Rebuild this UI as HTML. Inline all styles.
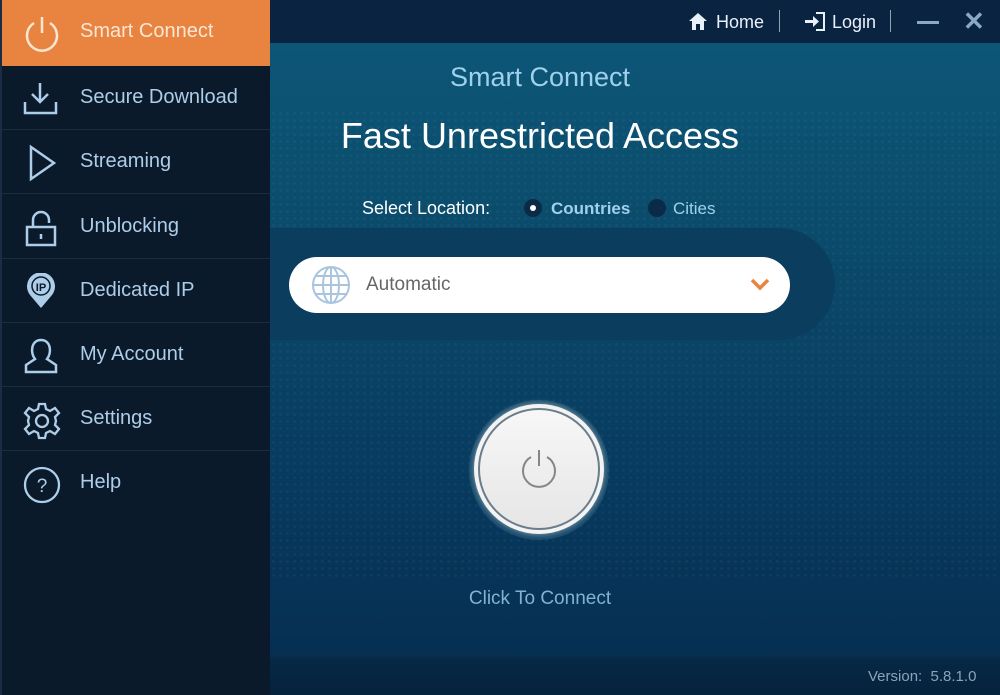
<!DOCTYPE html>
<html><head><style>
*{margin:0;padding:0;box-sizing:border-box}
body{width:1000px;height:695px;overflow:hidden;font-family:"Liberation Sans",sans-serif;background:#0b1a2c;position:relative}
.side{position:absolute;left:0;top:0;width:270px;height:695px;background:#0a1a2b}
.item{position:absolute;left:0;width:270px;height:64px;border-bottom:1px solid #1a2c40;color:#aecde8;font-size:20px}
.item span{position:absolute;left:80px;top:20px}
.item svg{position:absolute;left:22px;top:14px}
.act{background:#e8843f;color:#fbe6d6;border-bottom:none}
.main{position:absolute;left:270px;top:0;width:730px;height:695px;background:linear-gradient(#0d5677 40px,#0b4d6d 200px,#07395e 500px,#062f52 655px,#062845 660px,#06223d)}
.top{position:absolute;left:270px;top:0;width:730px;height:43px;background:#0a2340}
.dots{position:absolute;left:270px;top:110px;width:730px;height:470px;background-image:radial-gradient(circle,rgba(255,255,255,.04) 1.2px,transparent 1.5px);background-size:7px 7px}
</style></head><body>
<div class="main"></div>
<div class="dots"></div>
<div class="top">
 <svg style="position:absolute;left:418px;top:12px" width="20" height="19" viewBox="0 0 20 19"><path d="M10 1 L1 9 H4 V18 H8 V12 H12 V18 H16 V9 H19 Z" fill="#e8f0f8"/></svg>
 <div style="position:absolute;left:446px;top:12px;color:#e8f0f8;font-size:18px">Home</div>
 <div style="position:absolute;left:509px;top:10px;width:1px;height:22px;background:#8aa"></div>
 <svg style="position:absolute;left:534px;top:11px" width="22" height="21" viewBox="0 0 22 21"><path d="M1 9 H9 V5 L15 10.5 L9 16 V12 H1Z" fill="#e8f0f8"/><path d="M12 2 H20 V19 H12" fill="none" stroke="#e8f0f8" stroke-width="2"/></svg>
 <div style="position:absolute;left:562px;top:12px;color:#e8f0f8;font-size:18px">Login</div>
 <div style="position:absolute;left:620px;top:10px;width:1px;height:22px;background:#8aa"></div>
 <div style="position:absolute;left:647px;top:21px;width:22px;height:3px;background:#8aa8c8"></div>
 <div style="position:absolute;left:693px;top:6px;color:#8aa8c8;font-size:26px;font-weight:bold">✕</div>
</div>
<div style="position:absolute;left:270px;width:540px;top:62px;text-align:center;color:#9fd0ec;font-size:27px">Smart Connect</div>
<div style="position:absolute;left:270px;width:540px;top:115px;text-align:center;color:#fff;font-size:36px">Fast Unrestricted Access</div>
<div style="position:absolute;left:362px;top:198px;color:#fff;font-size:18px">Select Location:</div>
<div style="position:absolute;left:524px;top:199px;width:18px;height:18px;border-radius:50%;background:#0a2a48"></div>
<div style="position:absolute;left:530px;top:205px;width:6px;height:6px;border-radius:50%;background:#fff"></div>
<div style="position:absolute;left:551px;top:199px;color:#9fd0ec;font-size:17px;font-weight:bold">Countries</div>
<div style="position:absolute;left:648px;top:199px;width:18px;height:18px;border-radius:50%;background:#0a2a48"></div>
<div style="position:absolute;left:673px;top:199px;color:#9fd0ec;font-size:17px">Cities</div>
<div style="position:absolute;left:270px;top:228px;width:565px;height:112px;border-radius:0 56px 56px 0;background:#0a3d5e"></div>
<div style="position:absolute;left:289px;top:257px;width:501px;height:56px;border-radius:28px;background:#fff"></div>
<svg style="position:absolute;left:311px;top:265px" width="40" height="40" viewBox="0 0 40 40" fill="none" stroke="#a9c4de" stroke-width="2"><circle cx="20" cy="20" r="18"/><ellipse cx="20" cy="20" rx="8" ry="18"/><path d="M20 2V38M2 20H38M5 11H35M5 29H35"/></svg>
<div style="position:absolute;left:366px;top:274px;color:#666;font-size:19px">Automatic</div>
<svg style="position:absolute;left:749px;top:277px" width="22" height="14" viewBox="0 0 22 14"><path d="M3 3 L11 11 L19 3" fill="none" stroke="#e8843f" stroke-width="3.5"/></svg>
<div style="position:absolute;left:469px;top:400px;width:140px;height:140px;border-radius:50%;background:rgba(40,90,120,.6)"></div>
<div style="position:absolute;left:474px;top:404px;width:130px;height:130px;border-radius:50%;background:#f3f3f3;box-shadow:0 0 6px rgba(255,255,255,.5)"></div>
<div style="position:absolute;left:478px;top:408px;width:122px;height:122px;border-radius:50%;border:2px solid #6b7d8a;background:linear-gradient(#f7f7f7,#e6e6e6)"></div>
<svg style="position:absolute;left:517px;top:446px" width="44" height="46" viewBox="0 0 44 46" fill="none" stroke="#858585" stroke-width="2"><path d="M14 11 A16 16 0 1 0 30 11"/><path d="M22 4 V20"/></svg>
<div style="position:absolute;left:270px;width:540px;top:588px;text-align:center;color:#7fb3d6;font-size:19px">Click To Connect</div>
<div style="position:absolute;left:868px;top:668px;color:#8aa3ba;font-size:15px">Version:&nbsp; 5.8.1.0</div>

<div class="side">
 <div class="item act" style="top:0;height:66px"><svg width="40" height="40" viewBox="0 0 40 40" fill="none" stroke="#fbe6d6" stroke-width="2.5"><path d="M12 9 A15 15 0 1 0 28 9"/><path d="M20 3 V19"/></svg><span>Smart Connect</span></div>
 <div class="item" style="top:66px"><svg width="38" height="38" viewBox="0 0 38 38" fill="none" stroke="#aecde8" stroke-width="2.5"><path d="M18 3V22M10 14L18 22 26 14M3 22V33H34V22"/></svg><span>Secure Download</span></div>
 <div class="item" style="top:130px"><svg width="38" height="38" viewBox="0 0 38 38" fill="none" stroke="#aecde8" stroke-width="2.5"><path d="M9 3V35L32 19Z"/></svg><span>Streaming</span></div>
 <div class="item" style="top:195px"><svg width="38" height="38" viewBox="0 0 38 38" fill="none" stroke="#aecde8" stroke-width="2.5"><path d="M11 18V11A8 8 0 0 1 27 11V14"/><rect x="5" y="18" width="28" height="18"/><path d="M19 25V30"/></svg><span>Unblocking</span></div>
 <div class="item" style="top:259px"><svg width="38" height="38" viewBox="0 0 38 38"><path d="M19 35L8 22A14 14 0 1 1 30 22Z" fill="#aecde8"/><circle cx="19" cy="13" r="9" fill="none" stroke="#0a1a2b" stroke-width="1.5"/><text x="19" y="18" font-size="11" font-weight="bold" text-anchor="middle" fill="#0a1a2b" font-family="Liberation Sans">IP</text></svg><span>Dedicated IP</span></div>
 <div class="item" style="top:323px"><svg width="38" height="38" viewBox="0 0 38 38" fill="none" stroke="#aecde8" stroke-width="2.5"><path d="M13 22C8 16 9 3 19 3S30 16 25 22L34 28V35H4V28Z"/></svg><span>My Account</span></div>
 <div class="item" style="top:387px"><svg width="40" height="40" viewBox="0 0 40 40" fill="none" stroke="#aecde8" stroke-width="2.3"><circle cx="20" cy="20" r="6"/><path d="M17 3H23L24 8 28 10 33 7 37 12 33 16 34 20 33 24 37 28 33 33 28 30 24 32 23 37H17L16 32 12 30 7 33 3 28 7 24 6 20 7 16 3 12 7 7 12 10 16 8Z"/></svg><span>Settings</span></div>
 <div class="item" style="top:451px;border-bottom:none"><svg width="40" height="40" viewBox="0 0 40 40" fill="none" stroke="#aecde8" stroke-width="2.3"><circle cx="20" cy="20" r="17"/><text x="20" y="27" font-size="19" text-anchor="middle" fill="#aecde8" stroke="none" font-family="Liberation Sans">?</text></svg><span>Help</span></div>
 <div style="position:absolute;left:0;top:0;width:2px;height:695px;background:#1b2d44"></div>
</div>
</body></html>
